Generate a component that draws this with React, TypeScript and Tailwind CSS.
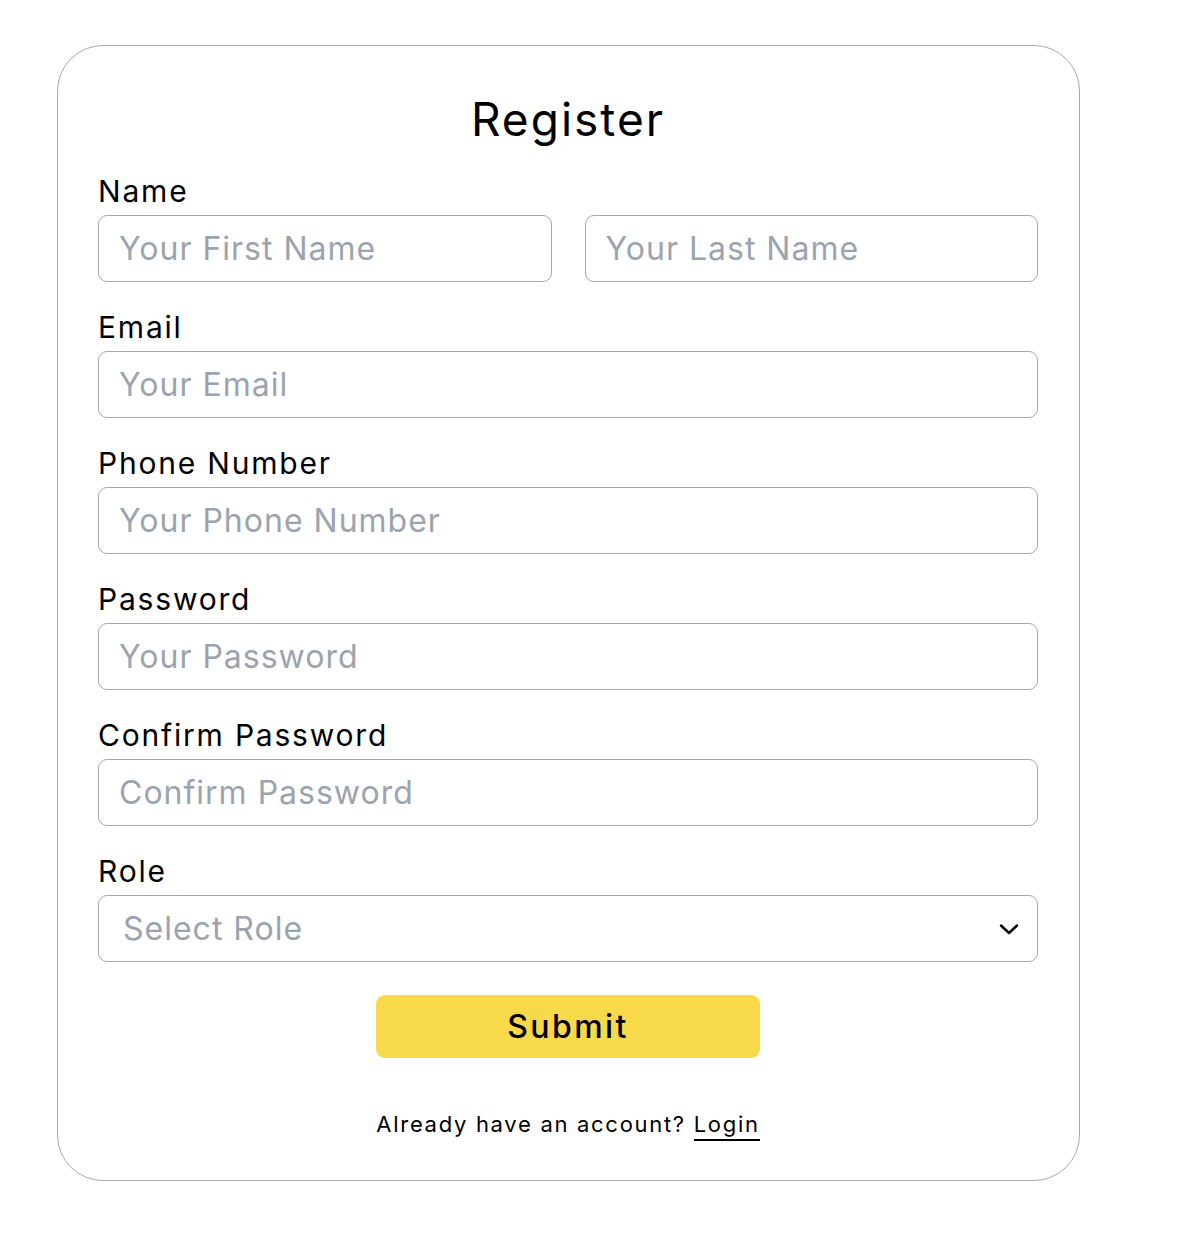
import React from "react";

function Label({ children }: { children: React.ReactNode }) {
  return (
    <div className="h-[36px] text-[30px] leading-[36px] text-black mb-[6px] tracking-[1.8px]">
      {children}
    </div>
  );
}

function Field({ placeholder }: { placeholder: string }) {
  return (
    <input
      type="text"
      placeholder={placeholder}
      className="h-[67px] w-full rounded-[9px] border-[1.5px] border-[#a8a8a8] bg-white px-[20px] text-[32px] tracking-[1px] text-black outline-none placeholder:text-[#9ca3af]"
    />
  );
}

export default function App() {
  return (
    <div className="min-h-[1240px] w-full bg-white pt-[45px] font-['Inter',sans-serif]">
      <div className="ml-[57px] flex h-[1136px] w-[1023px] flex-col rounded-[46px] border-[1.5px] border-[#a8a8a8] pl-[40px] pr-[41px]">
        <h1 className="mt-[50px] h-[46px] text-center text-[46px] leading-[46px] tracking-[2px] text-black">
          Register
        </h1>
        <div className="mt-[31px] flex flex-col gap-[27px]">
          <div>
            <Label>Name</Label>
            <div className="grid grid-cols-2 gap-[33px]">
              <Field placeholder="Your First Name" />
              <Field placeholder="Your Last Name" />
            </div>
          </div>
          <div>
            <Label>Email</Label>
            <Field placeholder="Your Email" />
          </div>
          <div>
            <Label>Phone Number</Label>
            <Field placeholder="Your Phone Number" />
          </div>
          <div>
            <Label>Password</Label>
            <Field placeholder="Your Password" />
          </div>
          <div>
            <Label>Confirm Password</Label>
            <Field placeholder="Confirm Password" />
          </div>
          <div>
            <Label>Role</Label>
            <div className="relative flex h-[67px] w-full items-center rounded-[9px] border-[1.5px] border-[#a8a8a8] bg-white pl-[24px] pr-[18px]">
              <span className="flex-1 text-[32px] tracking-[1px] text-[#9ca3af]">Select Role</span>
              <svg width="20" height="14" viewBox="0 0 20 14" fill="none">
                <path d="M2 3.5 L10 11 L18 3.5" stroke="black" strokeWidth="2.4" strokeLinecap="round" strokeLinejoin="round" />
              </svg>
            </div>
          </div>
        </div>
        <div className="mt-[33px] flex justify-center">
          <button className="h-[63px] w-[384px] rounded-[9px] bg-[#f8d949] text-[32px] font-medium tracking-[2.4px] text-black">
            Submit
          </button>
        </div>
        <div className="mt-[51px] text-center text-[22px] leading-[30px] tracking-[1.7px] text-black">
          Already have an account?{" "}
          <span className="border-b-2 border-black pb-[2px]">Login</span>
        </div>
      </div>
    </div>
  );
}
